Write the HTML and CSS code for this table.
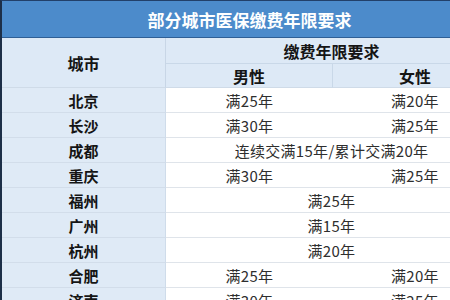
FILE: index.html
```html
<!DOCTYPE html>
<html lang="zh-CN">
<head>
<meta charset="utf-8">
<link rel="stylesheet" href="styles.css">
</head>
<body>
<div class="sheet">
  <div class="title">部分城市医保缴费年限要求</div>
  <div class="grid">
    <div class="hcity">城市</div>
    <div class="hreq">缴费年限要求</div>
    <div class="hsub">男性</div>
    <div class="hsub">女性</div>

    <div class="city">北京</div><div class="val">满25年</div><div class="val">满20年</div>
    <div class="city">长沙</div><div class="val">满30年</div><div class="val">满25年</div>
    <div class="city">成都</div><div class="val span">连续交满15年/累计交满20年</div>
    <div class="city">重庆</div><div class="val">满30年</div><div class="val">满25年</div>
    <div class="city">福州</div><div class="val span">满25年</div>
    <div class="city">广州</div><div class="val span">满15年</div>
    <div class="city">杭州</div><div class="val span">满20年</div>
    <div class="city">合肥</div><div class="val">满25年</div><div class="val">满20年</div>
    <div class="city">济南</div><div class="val">满30年</div><div class="val">满25年</div>
  </div>
</div>
</body>
</html>
```
FILE: styles.css
```css
html, body {
  margin: 0;
  padding: 0;
  background: #ffffff;
  overflow: hidden;
}
.sheet {
  width: 497px;
  border-left: 2px solid #1d2f48;
  border-top: 1px solid #22406a;
  font-family: "Noto Sans CJK SC", "Noto Sans", sans-serif;
  color: #2a2a2a;
}
.title {
  height: 37px;
  box-sizing: border-box;
  border-bottom: 1px solid #2f5f95;
  background: #4c8bcb;
  color: #ffffff;
  font-weight: bold;
  font-size: 17px;
  display: flex;
  align-items: center;
  justify-content: center;
  padding-right: 2px;
}
.grid {
  display: grid;
  grid-template-columns: 164px 167px 164px;
  grid-template-rows: 26px 24px;
  grid-auto-rows: 25px;
}
.grid > div {
  box-sizing: border-box;
  display: flex;
  align-items: center;
  justify-content: center;
  border-bottom: 1px solid #dfe4ea;
}
.hcity {
  grid-row: 1 / span 2;
  background: #dde9f6;
  font-weight: bold;
  font-size: 16px;
  color: #151515;
  border-right: 1px solid #c8d6e6;
  border-bottom-color: #cfdbe8 !important;
}
.hreq {
  grid-column: 2 / span 2;
  background: #dde9f6;
  font-weight: bold;
  font-size: 16px;
  color: #151515;
  border-bottom-color: #c9d8e8 !important;
}
.hsub {
  background: #dde9f6;
  font-weight: bold;
  font-size: 16px;
  color: #151515;
  border-bottom-color: #cfdbe8 !important;
}
.hsub:nth-of-type(3) {
  border-right: 1px solid #c9d8e8;
}
.city {
  background: #dfeaf6;
  font-weight: bold;
  font-size: 15px;
  color: #151515;
  border-right: 1px solid #cfdcea;
  border-bottom-color: #d2ddea !important;
}
.val {
  background: #ffffff;
  font-size: 15px;
  color: #2e2e2e;
  letter-spacing: 0.3px;
}
.span {
  grid-column: 2 / span 2;
}
```
